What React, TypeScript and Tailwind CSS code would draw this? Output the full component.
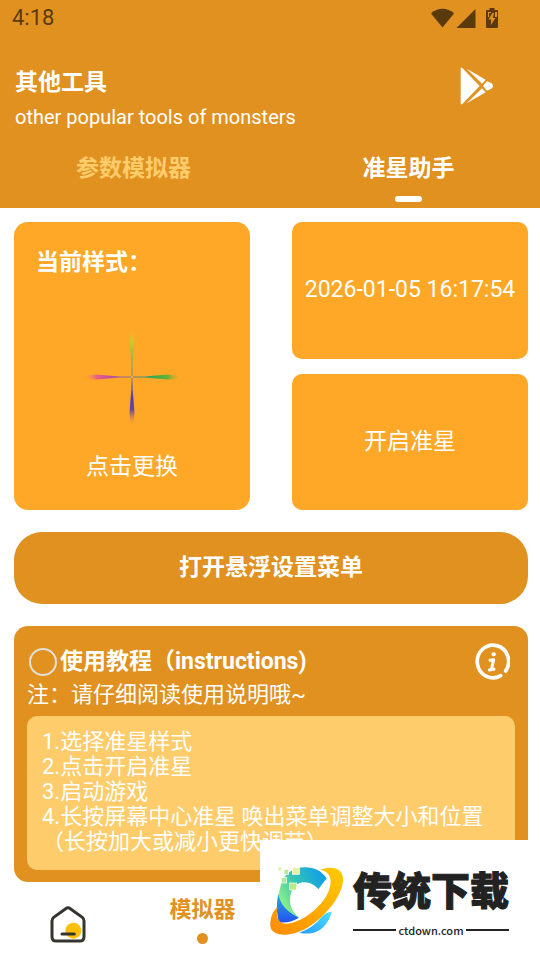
import type { ReactNode } from 'react'

interface CardProps {
  children: ReactNode
  className?: string
}

function CardButton({ children, className = '' }: CardProps) {
  return (
    <button type="button" className={`flex bg-[#ffa827] text-[23px] leading-7 text-white ${className}`}>
      {children}
    </button>
  )
}

function StatusBar() {
  return (
    <div className="flex h-9 items-center justify-between pl-3 pr-[41px] text-[#5a3a0d]">
      <span className="text-[22px] leading-6">4:18</span>
      <svg width="68" height="20" viewBox="0 0 68 20" fill="currentColor" aria-hidden="true">
        <path d="M0 5.5C6.500-.7 16.500-.7 23 5.500L11.500 19.500Z" />
        <path d="M44.500 1V20H25.500Z" />
        <path
          fillRule="evenodd"
          d="M58.500 0h5v2H66q1 0 1 1v16q0 1-1 1H56q-1 0-1-1V3q0-1 1-1h2.500ZM57 4v5h1V5h2V4ZM64 4v5h2V4ZM61.500 5L57.500 11.500h2.700L59.800 17L64.500 10h-2.700L63 5Z"
        />
      </svg>
    </div>
  )
}

function PlayIcon() {
  return (
    <svg width="34" height="38" viewBox="0 0 102 114" fill="#fff" aria-hidden="true">
      <path d="M2 4Q2 0 7 3L59 57L7 111Q2 114 2 109Z" />
      <path d="M20 5L77 38L66 50Z" />
      <path d="M20 109L77 76L66 64Z" />
      <path d="M80 43L94 48Q104 57 94 65L81 71L69 57Z" />
    </svg>
  )
}

function InfoIcon() {
  return (
    <svg width="36" height="38" viewBox="0 0 108 114" fill="none" stroke="#fff" strokeLinecap="round" aria-hidden="true">
      <path d="M80 98A47 49 0 1 1 95 84" strokeWidth="11" />
      <path d="M48 52L59 50L52 80M46 81L60 79" strokeWidth="9" strokeLinejoin="round" />
      <ellipse cx="59" cy="34" rx="4" ry="3" fill="#fff" strokeWidth="6" />
    </svg>
  )
}

function Crosshair() {
  return (
    <svg width="104" height="104" viewBox="-52 -52 104 104" aria-hidden="true">
      <defs>
        <linearGradient id="up" gradientUnits="userSpaceOnUse" x1="0" y1="0" x2="0" y2="-50">
          <stop offset="0" stopColor="#5d7c9c" />
          <stop offset=".4" stopColor="#9fb94a" />
          <stop offset=".72" stopColor="#d2c825" />
          <stop offset="1" stopColor="#ffa827" stopOpacity="0" />
        </linearGradient>
        <linearGradient id="right" gradientUnits="userSpaceOnUse" x1="0" y1="0" x2="50" y2="0">
          <stop offset="0" stopColor="#5d7c9c" />
          <stop offset=".45" stopColor="#37aa4b" />
          <stop offset=".72" stopColor="#68b337" />
          <stop offset="1" stopColor="#ffa827" stopOpacity="0" />
        </linearGradient>
        <linearGradient id="down" gradientUnits="userSpaceOnUse" x1="0" y1="0" x2="0" y2="50">
          <stop offset="0" stopColor="#68709a" />
          <stop offset=".45" stopColor="#573bb4" />
          <stop offset=".65" stopColor="#66489e" />
          <stop offset="1" stopColor="#ffa827" stopOpacity="0" />
        </linearGradient>
        <linearGradient id="left" gradientUnits="userSpaceOnUse" x1="0" y1="0" x2="-50" y2="0">
          <stop offset="0" stopColor="#806b96" />
          <stop offset=".45" stopColor="#c34da1" />
          <stop offset=".7" stopColor="#e95f86" />
          <stop offset="1" stopColor="#ffa827" stopOpacity="0" />
        </linearGradient>
      </defs>
      <path fill="url(#up)" d="M-.4-1L-.6-14L-2.500-36Q0-66 2.500-36L.6-14L.4-1Z" />
      <path fill="url(#right)" d="M1-.4L12-.5L36-2.500Q66 0 36 2.500L12 .5L1 .4Z" />
      <path fill="url(#down)" d="M-.4 1L-.7 12L-2.500 36Q0 66 2.500 36L.7 12L.4 1Z" />
      <path fill="url(#left)" d="M-1-.4L-12-.5L-36-2.500Q-66 0-36 2.500L-12 .5L-1 .4Z" />
    </svg>
  )
}

function HomeIcon() {
  return (
    <svg width="36" height="38" viewBox="0 0 108 114" fill="none" aria-hidden="true">
      <circle cx="70" cy="74" r="24" fill="#ffc00d" />
      <path
        d="M47 8Q54 3 61 8L97 34Q102 38 102 45V92Q102 105 89 105H19Q6 105 6 92V45Q6 38 11 34Z"
        stroke="#35342e"
        strokeWidth="9"
      />
      <path d="M36 84H73" stroke="#35342e" strokeWidth="9" strokeLinecap="round" />
    </svg>
  )
}

function SiteLogo() {
  return (
    <svg width="77" height="73" viewBox="39 84 231 219" aria-hidden="true">
      <defs>
        <linearGradient id="ring" x1="0" y1="1" x2="1" y2="0">
          <stop offset="0" stopColor="#ff8a00" />
          <stop offset="1" stopColor="#ffcb00" />
        </linearGradient>
        <linearGradient id="top" x1="0" y1=".6" x2="1" y2="0">
          <stop offset="0" stopColor="#8df087" />
          <stop offset=".4" stopColor="#35c4b4" />
          <stop offset="1" stopColor="#0796f5" />
        </linearGradient>
        <linearGradient id="side" x1="0" y1="0" x2="0" y2="1">
          <stop offset="0" stopColor="#25aee0" />
          <stop offset="1" stopColor="#2451ef" />
        </linearGradient>
        <linearGradient id="base" x1="0" y1="1" x2="1" y2="0">
          <stop offset="0" stopColor="#249bff" />
          <stop offset="1" stopColor="#48e1ff" />
        </linearGradient>
      </defs>
      <path fill="url(#top)" d="M76 152C84 112 118 94 150 94C178 94 200 105 215 127L190 160C172 136 130 127 111 163C98 194 107 226 132 245C102 239 72 215 70 180Z" />
      <path fill="url(#side)" d="M70 173C76 208 100 230 132 245C108 259 87 262 72 258C64 230 64 200 70 173Z" />
      <path fill="url(#base)" d="M230 227C220 270 185 303 133 290C157 281 170 272 187 257C202 242 207 230 230 227Z" />
      <path
        fill="url(#ring)"
        d="M197 101C229 89 260 95 264 125C267 170 219 237 157 275C112 301 62 303 49 280C40 257 52 225 68 212C62 238 67 261 91 263C132 265 202 217 222 163C234 128 224 108 197 101Z"
      />
      <g stroke="#fff" strokeWidth="2">
        <rect x="69" y="93" width="10" height="12" fill="#d9f3a2" />
        <rect x="87" y="100" width="14" height="15" fill="#b5eb95" />
        <rect x="112" y="94" width="21" height="21" fill="#e4f59b" />
        <rect x="79" y="125" width="16" height="16" fill="#b0e991" />
        <rect x="104" y="141" width="21" height="21" fill="#b5ed83" />
      </g>
    </svg>
  )
}

function Header() {
  return (
    <header className="bg-[#e09120] text-white">
      <StatusBar />
      <div className="flex items-start justify-between pt-[29px] pl-[15px] pr-[46px]">
        <div>
          <h1 className="text-[23px] leading-9 font-bold">其他工具</h1>
          <p className="text-xl leading-8">other popular tools of monsters</p>
        </div>
        <button type="button" aria-label="Google Play" className="pt-[2px]">
          <PlayIcon />
        </button>
      </div>
      <nav className="grid grid-cols-2 gap-9 pt-[22px] pb-[6px] pl-[14px] pr-3 text-[23px] leading-7 font-bold">
        <button type="button" className="flex flex-col items-center text-[#ffcc6b]">
          参数模拟器
        </button>
        <button type="button" className="flex flex-col items-center gap-[13px]">
          准星助手
          <span className="h-[6px] w-[27px] rounded-full bg-white" />
        </button>
      </nav>
    </header>
  )
}

function Tutorial() {
  return (
    <section className="mt-[22px] rounded-[14px] bg-[#e09120] px-[13px] pt-[17px] pb-3 text-white">
      <div className="flex items-center justify-between pr-[5px]">
        <label className="flex items-center gap-[3px] text-[23px] leading-7 font-bold">
          <input type="radio" name="tutorial" className="ml-[2px] size-7 appearance-none rounded-full border-2 border-[#e2dfda]" />
          使用教程（instructions)
        </label>
        <button type="button" aria-label="info">
          <InfoIcon />
        </button>
      </div>
      <p className="pb-[7px] text-[22px] leading-7">注：请仔细阅读使用说明哦~</p>
      <ol className="rounded-[10px] bg-[#ffcc6b] px-[15px] pt-[13px] pb-4 text-[22px] leading-[25px]">
        <li>1.选择准星样式</li>
        <li>2.点击开启准星</li>
        <li>3.启动游戏</li>
        <li>
          4.长按屏幕中心准星 唤出菜单调整大小和位置
          <br />
          （长按加大或减小更快调节）
        </li>
      </ol>
    </section>
  )
}

function BottomNav() {
  return (
    <nav className="grid grid-cols-4 pt-3">
      <button type="button" aria-label="首页" className="flex justify-center pt-3">
        <HomeIcon />
      </button>
      <button type="button" className="flex flex-col items-center gap-[7px] text-[22px] leading-8 font-bold text-[#e09120]">
        模拟器
        <span className="size-[11px] rounded-full bg-[#e09120]" />
      </button>
    </nav>
  )
}

function Watermark() {
  return (
    <div className="fixed right-0 bottom-0 flex h-30 w-70 items-center gap-2 bg-white pl-2 text-[#222]">
      <SiteLogo />
      <div className="w-39 pt-1">
        <div className="text-[39px] leading-14 font-black whitespace-nowrap [-webkit-text-stroke:1px_#222]">传统下载</div>
        <div className="flex items-center gap-[2px] font-['Noto_Sans_CJK_SC'] text-[11px] leading-5 font-medium">
          <span className="h-[2px] flex-1 bg-[#222]" />
          ctdown.com
          <span className="h-[2px] flex-1 bg-[#222]" />
        </div>
      </div>
    </div>
  )
}

export default function App() {
  return (
    <div className="min-h-screen bg-white font-[Roboto,'Noto_Sans_CJK_SC',sans-serif]">
      <Header />
      <main className="pt-[14px] pl-[14px] pr-3">
        <div className="grid h-72 grid-cols-2 gap-[42px]">
          <CardButton className="flex-col items-center rounded-[14px] pt-[27px]">
            <span className="self-start pl-[22px] font-bold">当前样式：</span>
            <span className="pt-12 pb-6">
              <Crosshair />
            </span>
            <span>点击更换</span>
          </CardButton>
          <div className="grid grid-rows-2 gap-[15px]">
            <CardButton className="items-center justify-center rounded-[10px]">2026-01-05 16:17:54</CardButton>
            <CardButton className="items-center justify-center rounded-[10px]">开启准星</CardButton>
          </div>
        </div>
        <button type="button" className="mt-[22px] h-18 w-full rounded-[28px] bg-[#e09120] text-[23px] font-bold text-white">
          打开悬浮设置菜单
        </button>
        <Tutorial />
      </main>
      <BottomNav />
      <Watermark />
    </div>
  )
}
